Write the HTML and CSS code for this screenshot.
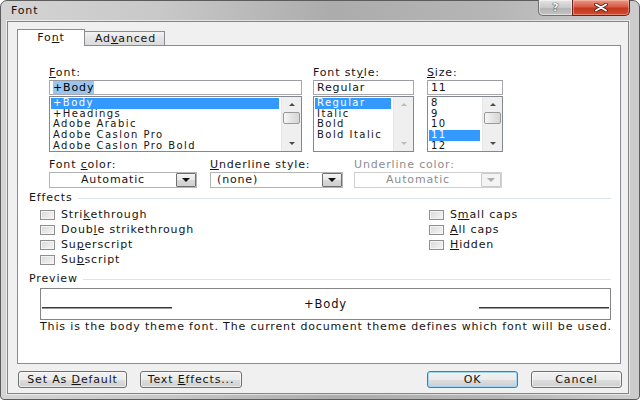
FILE: index.html
```html
<!DOCTYPE html>
<html>
<head>
<meta charset="utf-8">
<title>Font</title>
<link rel="stylesheet" href="styles.css">
</head>
<body>
<div class="window">
  <div class="titlebar">
    <span class="title">Font</span>
    <div class="caption">
      <div class="cap-btn help"><span>?</span></div>
      <div class="cap-btn close">
        <svg width="16" height="9" viewBox="0 0 16 9"><path d="M3 1.5 L13 7.5 M13 1.5 L3 7.5" stroke="#5a1a12" stroke-width="3.6" stroke-linecap="round" fill="none"/><path d="M3 1.5 L13 7.5 M13 1.5 L3 7.5" stroke="#ffffff" stroke-width="2" stroke-linecap="round" fill="none"/></svg>
      </div>
    </div>
  </div>
  <div class="client">
    <div class="tabs">
      <div class="tab active">Fo<u>n</u>t</div>
      <div class="tab">Ad<u>v</u>anced</div>
    </div>
    <div class="panel">
      <div class="pickers">
        <div class="picker p-font">
          <div class="lbl"><u>F</u>ont:</div>
          <div class="field"><span class="sel-text">+Body</span></div>
          <div class="list">
            <div class="items">
              <div class="item selected">+Body</div>
              <div class="item">+Headings</div>
              <div class="item">Adobe Arabic</div>
              <div class="item">Adobe Caslon Pro</div>
              <div class="item">Adobe Caslon Pro Bold</div>
            </div>
            <div class="vscroll">
              <div class="arr"><i class="tri up"></i></div>
              <div class="thumb"></div>
              <div class="track"></div>
              <div class="arr"><i class="tri down"></i></div>
            </div>
          </div>
        </div>
        <div class="picker p-style">
          <div class="lbl">Font st<u>y</u>le:</div>
          <div class="field"><span>Regular</span></div>
          <div class="list">
            <div class="items">
              <div class="item selected">Regular</div>
              <div class="item">Italic</div>
              <div class="item">Bold</div>
              <div class="item">Bold Italic</div>
            </div>
            <div class="vscroll disabled">
              <div class="arr"><i class="tri up"></i></div>
              <div class="track"></div>
              <div class="arr"><i class="tri down"></i></div>
            </div>
          </div>
        </div>
        <div class="picker p-size">
          <div class="lbl"><u>S</u>ize:</div>
          <div class="field"><span>11</span></div>
          <div class="list">
            <div class="items">
              <div class="item">8</div>
              <div class="item">9</div>
              <div class="item">10</div>
              <div class="item selected">11</div>
              <div class="item">12</div>
            </div>
            <div class="vscroll">
              <div class="arr"><i class="tri up"></i></div>
              <div class="thumb"></div>
              <div class="track"></div>
              <div class="arr"><i class="tri down"></i></div>
            </div>
          </div>
        </div>
      </div>

      <div class="combos">
        <div class="combo-col c-color">
          <div class="lbl">Font <u>c</u>olor:</div>
          <div class="combo"><span class="ctext centered">Automatic</span><span class="cbtn"><i class="tri down"></i></span></div>
        </div>
        <div class="combo-col c-ustyle">
          <div class="lbl"><u>U</u>nderline style:</div>
          <div class="combo"><span class="ctext">(none)</span><span class="cbtn"><i class="tri down"></i></span></div>
        </div>
        <div class="combo-col c-ucolor disabled">
          <div class="lbl">Underline color:</div>
          <div class="combo"><span class="ctext centered">Automatic</span><span class="cbtn"><i class="tri down"></i></span></div>
        </div>
      </div>

      <div class="group-head"><span>Effects</span><i class="rule"></i></div>
      <div class="effects">
        <div class="col">
          <div class="chk"><span class="box"></span>Stri<u>k</u>ethrough</div>
          <div class="chk"><span class="box"></span>Doub<u>l</u>e strikethrough</div>
          <div class="chk"><span class="box"></span>Su<u>p</u>erscript</div>
          <div class="chk"><span class="box"></span>Su<u>b</u>script</div>
        </div>
        <div class="col">
          <div class="chk"><span class="box"></span>S<u>m</u>all caps</div>
          <div class="chk"><span class="box"></span><u>A</u>ll caps</div>
          <div class="chk"><span class="box"></span><u>H</u>idden</div>
        </div>
      </div>

      <div class="group-head g-preview"><span>Preview</span><i class="rule"></i></div>
      <div class="preview">
        <span class="pline"></span>
        <span class="ptext">+Body</span>
        <span class="pline"></span>
      </div>
      <div class="desc">This is the body theme font. The current document theme defines which font will be used.</div>
    </div>

    <div class="buttons">
      <div class="btn b-default">Set As <u>D</u>efault</div>
      <div class="btn b-effects">Text <u>E</u>ffects...</div>
      <div class="btn b-ok">OK</div>
      <div class="btn b-cancel">Cancel</div>
    </div>
  </div>
</div>
</body>
</html>
```

FILE: styles.css
```css
* { box-sizing: border-box; }
html, body { margin: 0; padding: 0; }
body {
  width: 640px;
  height: 400px;
  overflow: hidden;
  background: #ffffff;
  font-family: "DejaVu Sans", sans-serif;
  font-size: 11px;
  letter-spacing: 0.85px;
  color: #141414;
}
u { text-decoration: underline; text-underline-offset: 1px; }

.window {
  width: 640px;
  height: 400px;
  display: flex;
  flex-direction: column;
  border: 1px solid #5c5c5c;
  border-radius: 7px 7px 4px 4px;
  background: linear-gradient(to right, #d4d4d4 0%, #c8c8c8 25%, #acacac 52%, #b6b6b6 78%, #cdcdcd 100%);
}

.titlebar {
  height: 20px;
  display: flex;
  align-items: flex-start;
  flex: none;
}
.title {
  padding-left: 10px;
  line-height: 20px;
  color: #111;
}
.caption {
  margin-left: auto;
  margin-right: 9px;
  margin-top: -1px;
  display: flex;
  height: 16px;
}
.cap-btn {
  height: 16px;
  display: flex;
  align-items: center;
  justify-content: center;
}
.help {
  width: 34px;
  border: 1px solid #6f6f6f;
  border-top: 0;
  border-right: 0;
  border-radius: 0 0 0 5px;
  background: linear-gradient(#e4e4e4, #c9c9c9 50%, #b4b4b4 51%, #c2c2c2);
  box-shadow: inset 0 0 0 1px rgba(255,255,255,0.5);
}
.help span {
  font-weight: bold;
  font-size: 11px;
  letter-spacing: 0;
  color: #f5f5f5;
  text-shadow: 0 0 1px #222, 0 0 1px #222;
}
.close {
  width: 58px;
  border: 1px solid #6a2218;
  border-top: 0;
  border-radius: 0 0 5px 0;
  background: linear-gradient(#e99a87, #d65b45 45%, #c5371f 55%, #d04b30);
  box-shadow: inset 0 0 0 1px rgba(255,210,200,0.45);
}

.client {
  flex: 1;
  margin: 0 10px 5px 6px;
  background: #f0f0f0;
  border: 1px solid #858585;
  box-shadow: 0 0 0 1px rgba(255,255,255,0.55);
  padding: 7px 7px 0 9px;
  display: flex;
  flex-direction: column;
}

.tabs {
  display: flex;
  align-items: flex-end;
  height: 16px;
}
.tab {
  height: 14px;
  width: 80px;
  line-height: 13px;
  text-align: center;
  border: 1px solid #898c95;
  border-bottom: 0;
  border-left: 0;
  background: linear-gradient(#f3f3f3, #e4e4e4 50%, #dbdbdb);
  padding-left: 2px;
}
.tab.active {
  position: relative;
  z-index: 1;
  width: 68px;
  height: 17px;
  margin-bottom: -1px;
  border-left: 1px solid #898c95;
  background: #ffffff;
  line-height: 16px;
  padding-left: 0;
}

.panel {
  height: 319px;
  flex: none;
  background: #ffffff;
  border: 1px solid #898c95;
  display: flex;
  flex-direction: column;
}

.lbl {
  height: 14px;
  line-height: 14px;
  white-space: nowrap;
}

/* font pickers */
.pickers {
  display: flex;
  padding: 20px 0 0 31px;
}
.p-font { width: 253px; }
.p-style { width: 101px; margin-left: 11px; }
.p-size { width: 76px; margin-left: 13px; }

.field {
  height: 15px;
  border: 1px solid #a7a9af;
  border-top-color: #9a9ca2;
  padding-left: 3px;
  line-height: 13px;
  background: #fff;
  white-space: nowrap;
}
.sel-text {
  background: #98c6ef;
  color: #000;
}
.list {
  margin-top: 1px;
  height: 56px;
  border: 1px solid #828790;
  display: flex;
  background: #fff;
}
.items {
  flex: 1;
  padding-top: 1px;
  overflow: hidden;
}
.item {
  height: 10.7px;
  line-height: 10.7px;
  font-size: 10px;
  letter-spacing: 1.45px;
  margin: 0 2px 0 1px;
  padding-left: 2px;
  white-space: nowrap;
}
.item.selected {
  background: #3399ff;
  color: #ffffff;
}
.vscroll {
  width: 20px;
  display: flex;
  flex-direction: column;
  background: #efefef;
  border-left: 1px solid #e6e6e6;
}
.arr {
  height: 15px;
  display: flex;
  align-items: center;
  justify-content: center;
}
.tri {
  width: 0;
  height: 0;
  border-left: 3.5px solid transparent;
  border-right: 3.5px solid transparent;
}
.tri.up { border-bottom: 3px solid #4c4c4c; }
.tri.down { border-top: 3px solid #4c4c4c; }
.vscroll.disabled .tri.up { border-bottom-color: #bcbcbc; }
.vscroll.disabled .tri.down { border-top-color: #bcbcbc; }
.thumb {
  height: 12px;
  margin: 0 1px;
  border: 1px solid #999;
  border-radius: 2px;
  background: linear-gradient(to right, #f5f5f5, #e4e4e4 50%, #d6d6d6);
}
.track { flex: 1; }

/* combos */
.combos {
  display: flex;
  padding: 6px 0 0 31px;
}
.c-color { width: 148px; }
.c-ustyle { width: 133px; margin-left: 13px; }
.c-ucolor { width: 148px; margin-left: 11px; }
.combo {
  height: 16px;
  border: 1px solid #b4b4b4;
  background: #fff;
  display: flex;
}
.ctext {
  flex: 1;
  line-height: 14px;
  padding-left: 6px;
  white-space: nowrap;
}
.ctext.centered { text-align: center; padding-left: 0; }
.cbtn {
  width: 20px;
  border: 1px solid #707070;
  border-radius: 1px;
  background: linear-gradient(#f4f4f4, #e8e8e8 50%, #d8d8d8 51%, #cfcfcf);
  display: flex;
  align-items: center;
  justify-content: center;
}
.cbtn .tri.down {
  border-left-width: 4px;
  border-right-width: 4px;
  border-top: 4px solid #111;
}
.disabled .lbl, .disabled .ctext { color: #8d8d8d; }
.disabled .combo { border-color: #cfcfcf; }
.disabled .cbtn {
  border-color: #c9c9c9;
  background: #f4f4f4;
}
.disabled .cbtn .tri.down { border-top-color: #adadad; }

/* group heads */
.group-head {
  display: flex;
  align-items: center;
  height: 12px;
  margin-top: 4px;
  padding: 0 9px 0 11px;
}
.group-head span { line-height: 12px; }
.rule {
  flex: 1;
  height: 1px;
  margin-left: 5px;
  background: #dce3ea;
}
.g-preview { margin-top: 6px; }

/* effects */
.effects {
  display: grid;
  grid-template-columns: 389px 1fr;
  padding: 3px 0 0 22px;
}
.chk {
  height: 15px;
  display: flex;
  align-items: center;
  white-space: nowrap;
}
.box {
  width: 15px;
  height: 10px;
  margin-right: 6px;
  border: 1px solid #8f8f8f;
  background: linear-gradient(135deg, #d9d9d9, #f6f6f6);
  box-shadow: inset 0 0 0 1px #f4f4f4;
}

/* preview */
.preview {
  height: 32px;
  margin: 3px 9px 0 22px;
  border: 1px solid #858585;
  display: flex;
  align-items: flex-start;
  padding: 0 1px;
}
.pline {
  width: 130px;
  height: 1px;
  margin-top: 18px;
  background: #3a3a3a;
  box-shadow: 0 1px 0 #9a9a9a;
}
.ptext {
  flex: 1;
  text-align: center;
  line-height: 30px;
  font-size: 11.5px;
  color: #111;
}
.desc {
  margin-top: 1px;
  padding-left: 22px;
  line-height: 12px;
  height: 12px;
  white-space: nowrap;
}

/* buttons */
.buttons {
  display: flex;
  margin-top: 7px;
  height: 17px;
  padding-left: 1px;
  margin-right: -1px;
}
.btn {
  height: 17px;
  line-height: 15px;
  text-align: center;
  border: 1px solid #707070;
  border-radius: 3px;
  background: linear-gradient(#f2f2f2, #ebebeb 50%, #dddddd 51%, #cfcfcf);
  box-shadow: inset 0 0 0 1px rgba(255,255,255,0.6);
  white-space: nowrap;
}
.b-default { width: 109px; }
.b-effects { width: 102px; margin-left: 13px; }
.b-ok {
  width: 91px;
  margin-left: auto;
  border-color: #3c7fb1;
  box-shadow: inset 0 0 0 1px #9fd8f6;
}
.b-cancel { width: 91px; margin-left: 13px; }
```
